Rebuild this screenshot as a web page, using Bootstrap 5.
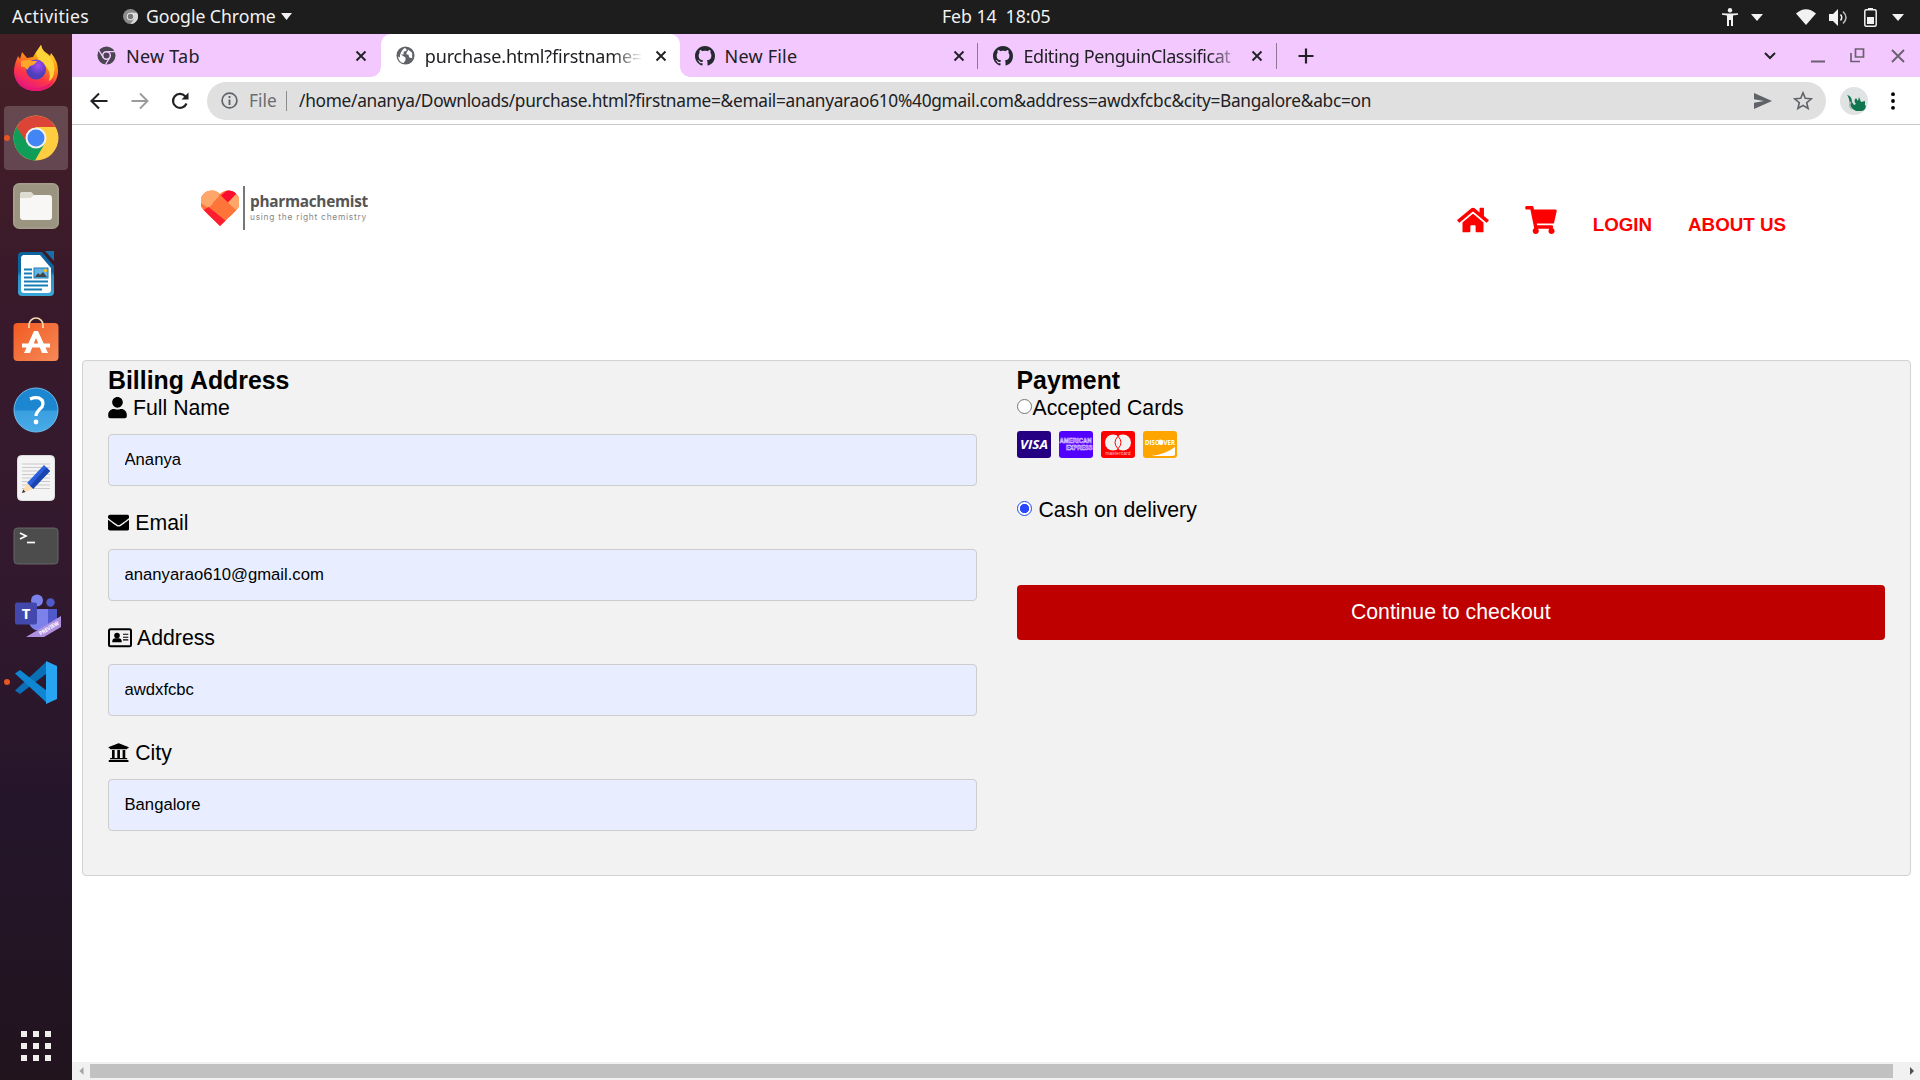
<!DOCTYPE html>
<html lang="en">
<head>
<meta charset="utf-8">
<title>purchase.html</title>
<link rel="stylesheet" href="https://cdn.jsdelivr.net/npm/bootstrap@5.3.0/dist/css/bootstrap.min.css">
<style>
body{width:1920px;height:1080px;overflow:hidden;font-family:"Noto Sans","Open Sans",sans-serif;font-size:17.3px;line-height:1;color:#202124;background:#fff}
svg{display:block;flex:none}
.sysbar{height:34px;background:#1d1d1d;color:#f2f2f2;font-size:17.7px;letter-spacing:-.06px}
.sys-left{width:942px;padding-left:12px}
.dock{width:72px;background:linear-gradient(#471f26 0,#37192b 28%,#33192e 50%,#24152a 76%,#21141d 100%);padding-top:2px}
.slot{height:68px;position:relative}
.slot.active::before{content:"";position:absolute;left:4px;top:2px;width:64px;height:64px;border-radius:4px;background:#ffffff30}
.slot svg{position:relative}
.running::after{content:"";position:absolute;left:4px;top:31px;width:6px;height:6px;border-radius:50%;background:#e95420}
.tabstrip{height:43px;background:#f3c8ff;padding-left:10px}
.btab{width:298.8px;height:43px;padding-left:15px;position:relative}
.btab.on{background:#fff;border-radius:10px 10px 0 0}
.btab.on::before,.btab.on::after{content:"";position:absolute;bottom:0;width:10px;height:10px}
.btab.on::before{left:-10px;background:radial-gradient(circle at 0 0,transparent 9.5px,#fff 10px)}
.btab.on::after{right:-10px;background:radial-gradient(circle at 100% 0,transparent 9.5px,#fff 10px)}
.btab.div-r::after{content:"";position:absolute;right:0;top:9px;width:1px;height:26px;background:#8d7794}
.tab-title{width:218px;margin-left:10px;overflow:hidden;white-space:nowrap;line-height:24px;font-size:18px}
.tab-title.fade-r{-webkit-mask-image:linear-gradient(90deg,#000 86%,transparent);letter-spacing:-.18px}
.tab-title.tight{letter-spacing:-.42px}
.toolbar-row{height:48px;border-bottom:1px solid #c9c9c9;padding-left:18px}
.omni{width:1619px;height:38px;border-radius:19px;background:#e0e0e0;margin-left:18px;padding-left:14px;padding-right:13px}
.url-sep{width:1px;height:20px;background:#8b8b8b;margin:0 12px 0 9px}
.url-text{white-space:nowrap;letter-spacing:-.29px}
.page-area{height:937px;font-family:"Liberation Sans",Arial,sans-serif;font-size:21.25px;color:#000}
.site-head{height:235px;padding:61px 134px 0 129px}
.brand-name{font:700 15.4px/16px "Open Sans",sans-serif;color:#555;letter-spacing:-.3px}
.brand-sub{font:400 8.4px/9px Inter,sans-serif;color:#888;letter-spacing:.74px;margin-top:3px}
.site-nav{gap:36px;height:28px;margin-top:20px;color:#f00;font-weight:700;font-size:18.75px}
.site-nav span{padding-top:10px}
.bill{margin:0 9px 0 10px;height:516px;background:#f2f2f2;border:1px solid #d3d3d3;border-radius:4px;padding:6px 25px 0}
.bill .row{--bs-gutter-x:40px}
.bill h3{font-size:24.86px;font-weight:700;line-height:27px;margin:0 0 2px}
.fieldlabel{height:24px;line-height:24px;margin-bottom:14px;gap:6px}
.field{height:52px;border:1px solid #ccc;border-radius:4px;background:#e8eeff;padding:0 15.5px;font-size:16.67px;line-height:50px;color:#000;width:100%;display:block;margin-bottom:25px;outline:0}
.pick{appearance:none;width:15px;height:15px;border:1px solid #767676;border-radius:50%;background:#fff;margin:0 0 4px;flex:none}
.pick:checked{border:1.5px solid #1a4cf0;background:radial-gradient(circle,#2b46ff 4.3px,#fff 5px)}
.cards-row{gap:8.3px;margin-top:11px;height:27px}
.pay{height:55px;background:#be0000;color:#fff;border:0;border-radius:4px;font-size:21.25px;width:100%;margin-top:63px}
.hbar{height:18px;background:#f1f1f1;padding-left:7px;padding-right:6px}
.thumb{width:1803px;height:14px;background:#c1c1c1}
</style>
<script src="https://cdn.jsdelivr.net/npm/bootstrap@5.3.0/dist/js/bootstrap.bundle.min.js"></script>
</head>
<body>
<svg width="0" height="0" class="position-absolute">
<defs>
<symbol id="gh" viewBox="0 0 16 16"><path fill="#24292f" d="M8 0C3.58 0 0 3.58 0 8c0 3.54 2.29 6.53 5.47 7.59.4.07.55-.17.55-.38 0-.19-.01-.82-.01-1.49-2.01.37-2.53-.49-2.69-.94-.09-.23-.48-.94-.82-1.13-.28-.15-.68-.52-.01-.53.63-.01 1.08.58 1.23.82.72 1.21 1.87.87 2.33.66.07-.52.28-.87.51-1.07-1.78-.2-3.64-.89-3.64-3.95 0-.87.31-1.59.82-2.15-.08-.2-.36-1.02.08-2.12 0 0 .67-.21 2.2.82.64-.18 1.32-.27 2-.27s1.36.09 2 .27c1.53-1.04 2.2-.82 2.2-.82.44 1.1.16 1.92.08 2.12.51.56.82 1.27.82 2.15 0 3.07-1.87 3.75-3.65 3.95.29.25.54.73.54 1.48 0 1.07-.01 1.93-.01 2.2 0 .21.15.46.55.38A8.01 8.01 0 0 0 16 8c0-4.42-3.58-8-8-8z"/></symbol>
<symbol id="cx" viewBox="0 0 12 12"><path d="M1.5 1.5l9 9M10.5 1.5l-9 9" stroke="#202124" stroke-width="1.9"/></symbol>
<linearGradient id="ff" x1=".8" y1="0" x2=".35" y2="1"><stop offset="0" stop-color="#fff44f"/><stop offset=".35" stop-color="#ff980e"/><stop offset=".7" stop-color="#ff3647"/><stop offset="1" stop-color="#e31587"/></linearGradient>
<radialGradient id="fp" cx=".6" cy=".3"><stop offset="0" stop-color="#a94bf2"/><stop offset="1" stop-color="#4c3fb8"/></radialGradient>
<linearGradient id="hb" x2="0" y2="1"><stop offset=".5" stop-color="#1c86d1"/><stop offset=".52" stop-color="#3a9fe0"/><stop offset="1" stop-color="#49abe8"/></linearGradient>
<linearGradient id="so" x2="1" y2="1"><stop offset="0" stop-color="#f25a22"/><stop offset="1" stop-color="#f58a57"/></linearGradient>
<linearGradient id="wr" x2="0" y2="1"><stop offset=".45" stop-color="#0d639e"/><stop offset=".55" stop-color="#2791c9"/><stop offset="1" stop-color="#3ba6d8"/></linearGradient>
</defs></svg>

<header class="sysbar d-flex align-items-center">
  <div class="sys-left d-flex align-items-center">
    <span style="width:111px;letter-spacing:.35px">Activities</span>
    <svg width="15" height="15" viewBox="0 0 16 16"><circle cx="8" cy="8" r="8" fill="#8b8b8b"/><path d="M8 4h7a8 8 0 0 1-7 12l4-6z" fill="#d8d8d8"/><circle cx="8" cy="8" r="4" fill="#eee"/><circle cx="8" cy="8" r="3" fill="#777"/></svg>
    <span class="ms-1 ps-1 text-nowrap" style="width:134px;margin-right:1px">Google Chrome</span>
    <svg width="11" height="7" class="ms-1"><path d="M0 0h11l-5.500 7z" fill="#f2f2f2"/></svg>
  </div>
  <span style="white-space:pre">Feb 14  18:05</span>
  <div class="d-flex align-items-center ms-auto pe-3">
    <svg width="16" height="18" viewBox="0 0 16 18"><circle cx="8" cy="2.300" r="2.200" fill="#f2f2f2"/><path d="M0 5.200l5 .3h6l5-.3v1.600l-5 .8V18H9v-6H7v6H5V7.600L0 6.800z" fill="#f2f2f2"/></svg>
    <svg width="12" height="7" style="margin-left:13px;margin-right:26px"><path d="M0 0h12l-6 7z" fill="#f2f2f2"/></svg>
    <svg width="20" height="16" viewBox="0 0 20 16" style="margin-left:7px"><path d="M0 4.500Q10-4 20 4.500L10 16z" fill="#f2f2f2"/></svg>
    <svg width="19" height="17" viewBox="0 0 19 17" style="margin-left:13px"><path d="M0 5h4l5-5v17l-5-5H0z" fill="#f2f2f2"/><path d="M11.500 5.500q2.500 3 0 6" fill="none" stroke="#f2f2f2" stroke-width="1.500"/><path d="M14 2.500q6 6 0 12" fill="none" stroke="#bbb" stroke-width="1.500"/></svg>
    <svg width="13" height="19" viewBox="0 0 13 19" style="margin-left:16px"><path d="M4 0h5v2H4z" fill="#f2f2f2"/><rect x=".8" y="1.800" width="11.400" height="16.400" rx="1.500" fill="none" stroke="#f2f2f2" stroke-width="1.500"/><path d="M3 9h7v7H3z" fill="#f2f2f2"/></svg>
    <svg width="12" height="7" style="margin-left:15px"><path d="M0 0h12l-6 7z" fill="#f2f2f2"/></svg>
  </div>
</header>

<div class="d-flex" style="height:1046px">
  <aside class="dock d-flex flex-column">
    <div class="slot d-flex align-items-center justify-content-center"><svg width="46" height="48" viewBox="0 0 46 48" class="mb-1"><path d="M3 17l2-5 2 3 2-7 5 6 6-1 3-5 5-7q1 6 7 9l2 2 1-3q7 8 7 18c0 12-9 20-22 20C9 47 1 38 1 27c0-4 1-7 2-10z" fill="url(#ff)"/><path d="M23 9l5-8q1 7 8 11 7 6 5 17-1 6-5 8 3-10-5-16-7-5-8-12z" fill="#ffd43a"/><circle cx="23" cy="25.500" r="10" fill="url(#fp)"/><path d="M8 17q6-2 11 0h5q-2 4-7 5l-3 4Q12 22 8 23z" fill="#ffa62b"/><path d="M2 31q6 13 20 13 13 0 19-9-5 12-19 12Q6 46 2 31z" fill="#e6186f"/></svg></div>
    <div class="slot active running d-flex align-items-center justify-content-center"><svg width="46" height="46" viewBox="0 0 46 46"><circle cx="23" cy="23" r="22.500" fill="#ffcd40"/><path d="M3.500 12A22.500 22.500 0 0 1 42.500 12H23L13 29z" fill="#db4437"/><path d="M3.500 12A22.500 22.500 0 0 0 22 45.500L32 28 14 28z" fill="#0f9d58"/><circle cx="23" cy="23" r="10.500" fill="#f1f1f1"/><circle cx="23" cy="23" r="8.500" fill="#4285f4"/></svg></div>
    <div class="slot d-flex align-items-center justify-content-center"><svg width="46" height="46" viewBox="0 0 46 46"><rect x=".7" y=".7" width="44.600" height="44.600" rx="5" fill="#9b9480" stroke="#b9b3a3"/><path d="M7 12q0-3 3-3h7q2 0 3 3h16q3 0 3 3v19q0 3-3 3H10q-3 0-3-3z" fill="#f8f7f5"/><path d="M7 15v-3q0-3 3-3h7q2 0 4 3l-3 3z" fill="#dedbd0"/></svg></div>
    <div class="slot d-flex align-items-center justify-content-center"><svg width="38" height="46" viewBox="0 0 38 46"><path d="M5 1h20l12 14v26q0 4-4 4H5q-4 0-4-4V5q0-4 4-4z" fill="url(#wr)"/><path d="M28 0h9v10z" fill="#1b6ea8"/><path d="M6 4h17l11 13v22q0 3-3 3H7q-3 0-3-3V6z" fill="#fff"/><path d="M7 18.500h8M7 22.500h8M7 26.500h8M7 30.500h24M7 34.500h24M7 38.500h18" stroke="#167cb6" stroke-width="1.800"/><rect x="17" y="17" width="14" height="10" fill="#64b4e4" stroke="#167cb6"/><path d="M18 26l3-4 2 2 3-3 4 5z" fill="#444"/><circle cx="28.500" cy="19.500" r="1.700" fill="#f6bd22"/></svg></div>
    <div class="slot d-flex align-items-center justify-content-center"><svg width="46" height="46" viewBox="0 0 46 46" style="margin-top:-7px"><rect x=".5" y="7" width="45" height="38" rx="4" fill="url(#so)"/><path d="M16 12V9a7 7 0 0 1 14 0v3" fill="none" stroke="#f5d9ab" stroke-width="1.700"/><path d="M11 37l10-22h4l10 22h-6L23 22l-6 15zM9 27.500h28v4H9z" fill="#fff"/></svg></div>
    <div class="slot d-flex align-items-center justify-content-center"><svg width="46" height="46" viewBox="0 0 46 46"><circle cx="23" cy="23" r="22" fill="url(#hb)" stroke="#70bcec"/><path d="M17 12q5-2 9-1 6 3 3 9-6 5-6 9" fill="none" stroke="#fff" stroke-width="3.200"/><circle cx="23" cy="35" r="2.400" fill="#fff"/></svg></div>
    <div class="slot d-flex align-items-center justify-content-center"><svg width="38" height="46" viewBox="0 0 38 46"><rect x=".5" y=".5" width="37" height="45" rx="4" fill="#f4f4f4" stroke="#ddd"/><path d="M5 9h28M5 12.500h28M5 16h28M5 19.500h28M5 23h28M5 26.500h28M5 30h28M5 33.500h28" stroke="#c9c9c9"/><path d="M10 28L27 10l6 6-17 18z" fill="#2a60de"/><path d="M29.500 12.500L33 16 16 34l-3-3z" fill="#1b44ad"/><path d="M10 28l6 6-11 4z" fill="#ffdcb2"/><path d="M6.200 34.500L8.500 37 5 38z" fill="#333"/></svg></div>
    <div class="slot d-flex align-items-center justify-content-center"><svg width="46" height="38" viewBox="0 0 46 38"><rect x="1" y="1" width="44" height="36" rx="3.500" fill="#4c4c4c" stroke="#666"/><path d="M7 6l6 3-6 3" fill="none" stroke="#fff" stroke-width="1.700"/><path d="M14 15.500h8" stroke="#fff" stroke-width="1.700"/></svg></div>
    <div class="slot d-flex align-items-center justify-content-center"><svg width="46" height="44" viewBox="0 0 46 44" class="ms-1 mt-1"><circle cx="22" cy="6.500" r="6" fill="#7b83eb"/><circle cx="35.500" cy="8.500" r="4.200" fill="#5059c9"/><path d="M32 15h10v18H32z" fill="#5059c9"/><path d="M14 15h19v21H20q-6-3-6-9z" fill="#7b83eb"/><rect y="8.500" width="22" height="22" rx="2" fill="#4348ad"/><text x="11" y="25" fill="#fff" font-size="15" font-weight="700" text-anchor="middle" font-family="Noto Sans">T</text><path d="M11 43L46 22v11L29 43z" fill="#ae90e0"/><text transform="translate(25.500 41.500) rotate(-31)" font-size="5.500" fill="#fff" font-weight="700" font-family="Noto Sans" textLength="22" lengthAdjust="spacingAndGlyphs">PREVIEW</text></svg></div>
    <div class="slot running d-flex align-items-center justify-content-center"><svg width="43" height="43" viewBox="0 0 43 43"><path d="M0 29.500L31 1v12L5 33z" fill="#0a6fb5"/><path d="M0 12.500L5 9l27 21v12z" fill="#0e86d2"/><path d="M31 0l11 5v33l-11 5z" fill="#27a5f2"/></svg></div>
    <svg class="mt-auto mb-3 ms-3" width="36" height="36" viewBox="0 0 36 36"><path d="M5 3h6v6H5zM17 3h6v6h-6zM29 3h6v6h-6zM5 15h6v6H5zM17 15h6v6h-6zM29 15h6v6h-6zM5 27h6v6H5zM17 27h6v6h-6zM29 27h6v6h-6z" fill="#f0efec"/></svg>
  </aside>

  <div class="flex-grow-1">
    <div class="tabstrip d-flex align-items-center">
      <div class="btab d-flex align-items-center">
        <svg width="19" height="19" viewBox="0 0 20 20"><circle cx="10" cy="10" r="9.500" fill="#4a4551"/><circle cx="10" cy="10" r="4" fill="none" stroke="#f3c8ff" stroke-width="1.600"/><path d="M10 6h9M6.500 12L2 4.500M13.500 12L9 19.500" stroke="#f3c8ff" stroke-width="1.400"/></svg>
        <span class="tab-title" style="letter-spacing:.25px">New Tab</span><svg width="12" height="12" style="margin-left:11px"><use href="#cx"/></svg>
      </div>
      <div class="btab on d-flex align-items-center">
        <svg width="19" height="19" viewBox="0 0 20 20"><circle cx="10" cy="10" r="9.500" fill="#5f6368"/><path d="M9 2q3 1 2 3L8 6v3H5l5 3v3l-2 3q-5-1-6-7l2 1q0-6 5-10zM13 4l4 3v6l-3-1-1-3h-2V7z" fill="#fff"/></svg>
        <span class="tab-title fade-r">purchase.html?firstname=</span><svg width="12" height="12" style="margin-left:12px"><use href="#cx"/></svg>
      </div>
      <div class="btab div-r d-flex align-items-center">
        <svg width="20" height="20"><use href="#gh"/></svg>
        <span class="tab-title" style="letter-spacing:.2px">New File</span><svg width="12" height="12" style="margin-left:10px"><use href="#cx"/></svg>
      </div>
      <div class="btab div-r d-flex align-items-center">
        <svg width="20" height="20"><use href="#gh"/></svg>
        <span class="tab-title fade-r tight">Editing PenguinClassificat</span><svg width="12" height="12" style="margin-left:10px"><use href="#cx"/></svg>
      </div>
      <svg width="16" height="16" style="margin-left:21px"><path d="M8 .5v15M.5 8h15" stroke="#202124" stroke-width="2.200"/></svg>
      <div class="d-flex align-items-center ms-auto" style="padding-right:15px">
        <svg width="12" height="8"><path d="M1 1l5 5 5-5" fill="none" stroke="#202124" stroke-width="2"/></svg>
        <svg width="14" height="14" style="margin-left:35px"><path d="M0 12.500h14" stroke="#6b6070" stroke-width="2"/></svg>
        <svg width="15" height="15" style="margin-left:25px"><path d="M5.500 1h8v8h-8zM1 5v8.500h9" fill="none" stroke="#6b6070" stroke-width="1.700"/></svg>
        <svg width="14" height="14" style="margin-left:26px"><path d="M1 1l12 12M13 1L1 13" stroke="#6b6070" stroke-width="1.900"/></svg>
      </div>
    </div>

    <div class="toolbar-row d-flex align-items-center">
      <svg width="18" height="18"><path d="M17.500 9H2M9 1.500L1.500 9 9 16.500" fill="none" stroke="#202124" stroke-width="2.100"/></svg>
      <svg width="18" height="18" style="margin-left:23px"><path d="M.5 9H16M9 1.500L16.500 9 9 16.500" fill="none" stroke="#9b9b9b" stroke-width="1.900"/></svg>
      <svg width="18" height="18" style="margin-left:22px"><path d="M15.500 11.500a7 7 0 1 1-1.300-7.300L16 6" fill="none" stroke="#202124" stroke-width="2.200"/><path d="M17.500.5v7h-7z" fill="#202124"/></svg>
      <div class="omni d-flex align-items-center">
        <svg width="17" height="17"><circle cx="8.500" cy="8.500" r="7.400" fill="none" stroke="#5f6368" stroke-width="1.700"/><path d="M8.500 7.500V13M8.500 4v2" stroke="#5f6368" stroke-width="1.900"/></svg>
        <span style="color:#6a6d71;margin-left:11px;width:28px">File</span><i class="url-sep"></i>
        <span class="url-text">/home/ananya/Downloads/purchase.html?firstname=&amp;email=ananyarao610%40gmail.com&amp;address=awdxfcbc&amp;city=Bangalore&amp;abc=on</span>
        <svg class="ms-auto" width="18" height="16"><path d="M0 0l18 8-18 8V9.800L10 8 0 6.200z" fill="#5f6368"/></svg>
        <svg width="20" height="19" viewBox="0 0 20 19" style="margin-left:21px"><path d="M10 1.800l2.300 5.500 6 .5-4.600 3.900 1.400 5.800L10 14.400l-5.100 3.100 1.400-5.800L1.700 7.800l6-.5z" fill="none" stroke="#5f6368" stroke-width="1.600"/></svg>
      </div>
      <svg width="28" height="28" style="margin-left:14px"><circle cx="14" cy="14" r="14" fill="#e0e3e3"/><path d="M7 8q5 1 5 7l2 3 2-1q-3-3 0-6l2 3 1-4 2 5 4-1v5l1-1q0 5-4 6h-6q-5-2-6-7-1-7-3-9z" fill="#10764f"/><path d="M12 22q-4-3-1-7" fill="none" stroke="#a7b5af" stroke-width="1.500"/></svg>
      <svg width="4" height="18" style="margin-left:23px"><circle cx="2" cy="2.200" r="1.900"/><circle cx="2" cy="9" r="1.900"/><circle cx="2" cy="15.800" r="1.900"/></svg>
    </div>

    <main class="page-area">
      <div class="site-head d-flex align-items-start justify-content-between">
        <div class="d-flex align-items-center">
          <svg width="38" height="36" viewBox="1 0 37 36"><clipPath id="hc"><path d="M19.500 36L3 20A11 11 0 0 1 19.500 4 11 11 0 0 1 36 20z"/></clipPath><g clip-path="url(#hc)"><path d="M0 0h39v36H0z" fill="#ff7438"/><path d="M0 0h20l-2 8-10 10-8-5z" fill="#ffa66b"/><path d="M20 6l7-6h12l-12 13z" fill="#fb0b30"/><path d="M27 13l9-9h4v17h-4z" fill="#ffa66b"/><path d="M3 20l5-3 20 16-9 6z" fill="#fc1e2f"/><path d="M12 13l8-8 16 16-7 7z" fill="#ff7438"/></g></svg>
          <div style="width:2px;height:44px;background:#777;margin:0 5px 0 4px"></div>
          <div><div class="brand-name">pharmachemist</div><div class="brand-sub">using the right chemistry</div></div>
        </div>
        <nav class="site-nav d-flex align-items-start">
          <svg width="32" height="28" viewBox="0 0 576 512" fill="#f00"><path d="M280.370 148.260L96 300.110V464a16 16 0 0 0 16 16l112.060-.29a16 16 0 0 0 15.920-16V368a16 16 0 0 1 16-16h64a16 16 0 0 1 16 16v95.640a16 16 0 0 0 16 16.050L464 480a16 16 0 0 0 16-16V300L295.670 148.260a12.190 12.190 0 0 0-15.300 0zM571.600 251.470L488 182.560V44.050a12 12 0 0 0-12-12h-56a12 12 0 0 0-12 12v72.610L318.470 43a48 48 0 0 0-61 0L4.340 251.470a12 12 0 0 0-1.600 16.900l25.500 31A12 12 0 0 0 45.150 301l235.220-193.740a12.190 12.190 0 0 1 15.300 0L530.900 301a12 12 0 0 0 16.900-1.600l25.500-31a12 12 0 0 0-1.700-16.930z"/></svg>
          <svg width="32" height="28" viewBox="0 0 576 512" fill="#f00"><path d="M528.120 301.319l47.273-208C578.806 78.301 567.391 64 551.990 64H159.208l-9.166-44.810C147.758 8.021 137.930 0 126.529 0H24C10.745 0 0 10.745 0 24v16c0 13.255 10.745 24 24 24h69.883l70.248 343.435C147.325 417.100 136 435.222 136 456c0 30.928 25.072 56 56 56s56-25.072 56-56c0-15.674-6.447-29.835-16.824-40h209.647C430.447 426.165 424 440.326 424 456c0 30.928 25.072 56 56 56s56-25.072 56-56c0-22.172-12.888-41.332-31.579-50.405l5.517-24.276c3.413-15.018-8.002-29.319-23.403-29.319H218.117l-6.545-32h293.145c11.206 0 20.920-7.754 23.403-18.681z"/></svg>
          <span>LOGIN</span><span>ABOUT US</span>
        </nav>
      </div>

      <form class="bill">
        <div class="row">
          <div class="col-6">
            <h3>Billing Address</h3>
            <label class="fieldlabel d-flex align-items-center"><svg width="19" height="21.250" viewBox="0 0 448 512"><path d="M224 256c70.700 0 128-57.300 128-128S294.700 0 224 0 96 57.300 96 128s57.300 128 128 128zm89.600 32h-16.700c-22.200 10.200-46.900 16-72.900 16s-50.600-5.800-72.900-16h-16.700C60.200 288 0 348.200 0 422.400V464c0 26.500 21.500 48 48 48h352c26.500 0 48-21.500 48-48v-41.600c0-74.200-60.200-134.400-134.400-134.400z"/></svg>Full Name</label>
            <input class="field" value="Ananya">
            <label class="fieldlabel d-flex align-items-center"><svg width="21.250" height="21.250" viewBox="0 0 512 512"><path d="M502.300 190.800c3.900-3.100 9.700-.2 9.700 4.700V400c0 26.500-21.500 48-48 48H48c-26.500 0-48-21.500-48-48V195.600c0-5 5.700-7.800 9.700-4.700 22.400 17.400 52.100 39.500 154.100 113.600 21.100 15.400 56.700 47.800 92.200 47.600 35.700.3 72-32.800 92.300-47.600 102-74.100 131.600-96.300 154-113.700zM256 320c23.200.4 56.600-29.200 73.400-41.400 132.700-96.300 142.800-104.700 173.400-128.700 5.800-4.500 9.200-11.500 9.200-18.900v-19c0-26.500-21.500-48-48-48H48c-26.500 0-48 21.500-48 48v19c0 7.400 3.400 14.300 9.200 18.900 30.600 23.900 40.700 32.400 173.400 128.700 16.800 12.200 50.200 41.800 73.400 41.400z"/></svg>Email</label>
            <input class="field" value="ananyarao610@gmail.com">
            <label class="fieldlabel d-flex align-items-center" style="gap:5px"><svg width="24" height="21.250" viewBox="0 0 24 21"><rect x="1" y="2" width="22" height="17" rx="1.500" fill="none" stroke="#000" stroke-width="2"/><circle cx="9" cy="8.300" r="2.800"/><path d="M4.200 15.200q0-4 3-4h3.600q3 0 3 4zM15 6.500h5.300v1.200H15zM15 9.500h5.300v1.200H15zM15 12.200h5.300v1.200H15z"/></svg>Address</label>
            <input class="field" value="awdxfcbc">
            <label class="fieldlabel d-flex align-items-center"><svg width="21.250" height="21.250" viewBox="0 0 512 512"><path d="M496 128v16a8 8 0 0 1-8 8h-24v12c0 6.600-5.400 12-12 12H60c-6.600 0-12-5.400-12-12v-12H24a8 8 0 0 1-8-8v-16a8 8 0 0 1 5-7.400l232-88a8 8 0 0 1 6 0l232 88a8 8 0 0 1 5 7.400zM472 432H40c-13.300 0-24 10.700-24 24v16a8 8 0 0 0 8 8h464a8 8 0 0 0 8-8v-16c0-13.300-10.700-24-24-24zM96 192v192H60c-6.600 0-12 5.400-12 12v20h416v-20c0-6.600-5.400-12-12-12h-36V192h-64v192h-64V192h-64v192h-64V192z"/></svg>City</label>
            <input class="field" value="Bangalore">
          </div>
          <div class="col-6">
            <h3>Payment</h3>
            <label class="fieldlabel d-flex align-items-center mb-0" style="gap:1px"><input type="radio" name="abc" class="pick">Accepted Cards</label>
            <div class="cards-row d-flex">
              <svg width="34" height="27"><rect width="34" height="27" rx="3" fill="#250082"/><text x="17" y="18" fill="#fff" font-size="12.500" font-weight="700" font-style="italic" text-anchor="middle" textLength="28" lengthAdjust="spacingAndGlyphs" font-family="Open Sans">VISA</text></svg>
              <svg width="34" height="27"><rect width="34" height="27" rx="3" fill="#5200ff"/><g fill="none" stroke="#e2d8ff" stroke-width=".55" font-size="6.500" font-weight="700" font-family="Liberation Sans"><text x=".5" y="12" textLength="32" lengthAdjust="spacingAndGlyphs">AMERICAN</text><text x="7" y="19" textLength="26.500" lengthAdjust="spacingAndGlyphs">EXPRESS</text></g></svg>
              <svg width="34" height="27"><rect width="34" height="27" rx="3" fill="red"/><circle cx="12" cy="11.500" r="8" fill="#f2f2f2"/><circle cx="22" cy="11.500" r="8" fill="#f2f2f2"/><path d="M17 5.200q-6 6.300 0 12.600 6-6.300 0-12.600z" fill="#f2f2f2" stroke="red"/><text x="17" y="24" fill="#ffd0d0" font-size="4.500" text-anchor="middle" textLength="25" font-family="Liberation Sans">mastercard</text></svg>
              <svg width="34" height="27"><rect width="34" height="27" rx="3" fill="#ffa500"/><text x="17" y="13.500" fill="#fff" font-size="6.800" font-weight="700" text-anchor="middle" textLength="30" lengthAdjust="spacingAndGlyphs" font-family="Open Sans">DISCOVER</text><circle cx="17.500" cy="11" r="2.600" fill="#fff"/><path d="M8 25q15-2 24-9v7q0 2-2 2z" fill="#fff"/></svg>
            </div>
            <label class="fieldlabel d-flex align-items-center mb-0" style="gap:7px;margin-top:40px"><input type="radio" name="abc" class="pick" checked>Cash on delivery</label>
            <button type="button" class="pay">Continue to checkout</button>
          </div>
        </div>
      </form>
    </main>

    <div class="hbar d-flex align-items-center">
      <svg width="11" height="8"><path d="M4.500 0v8L.5 4z" fill="#a3a3a3"/></svg>
      <div class="thumb"></div>
      <svg class="ms-auto" width="4" height="8"><path d="M0 0v8l4-4z" fill="#505050"/></svg>
    </div>
  </div>
</div>
</body>
</html>
